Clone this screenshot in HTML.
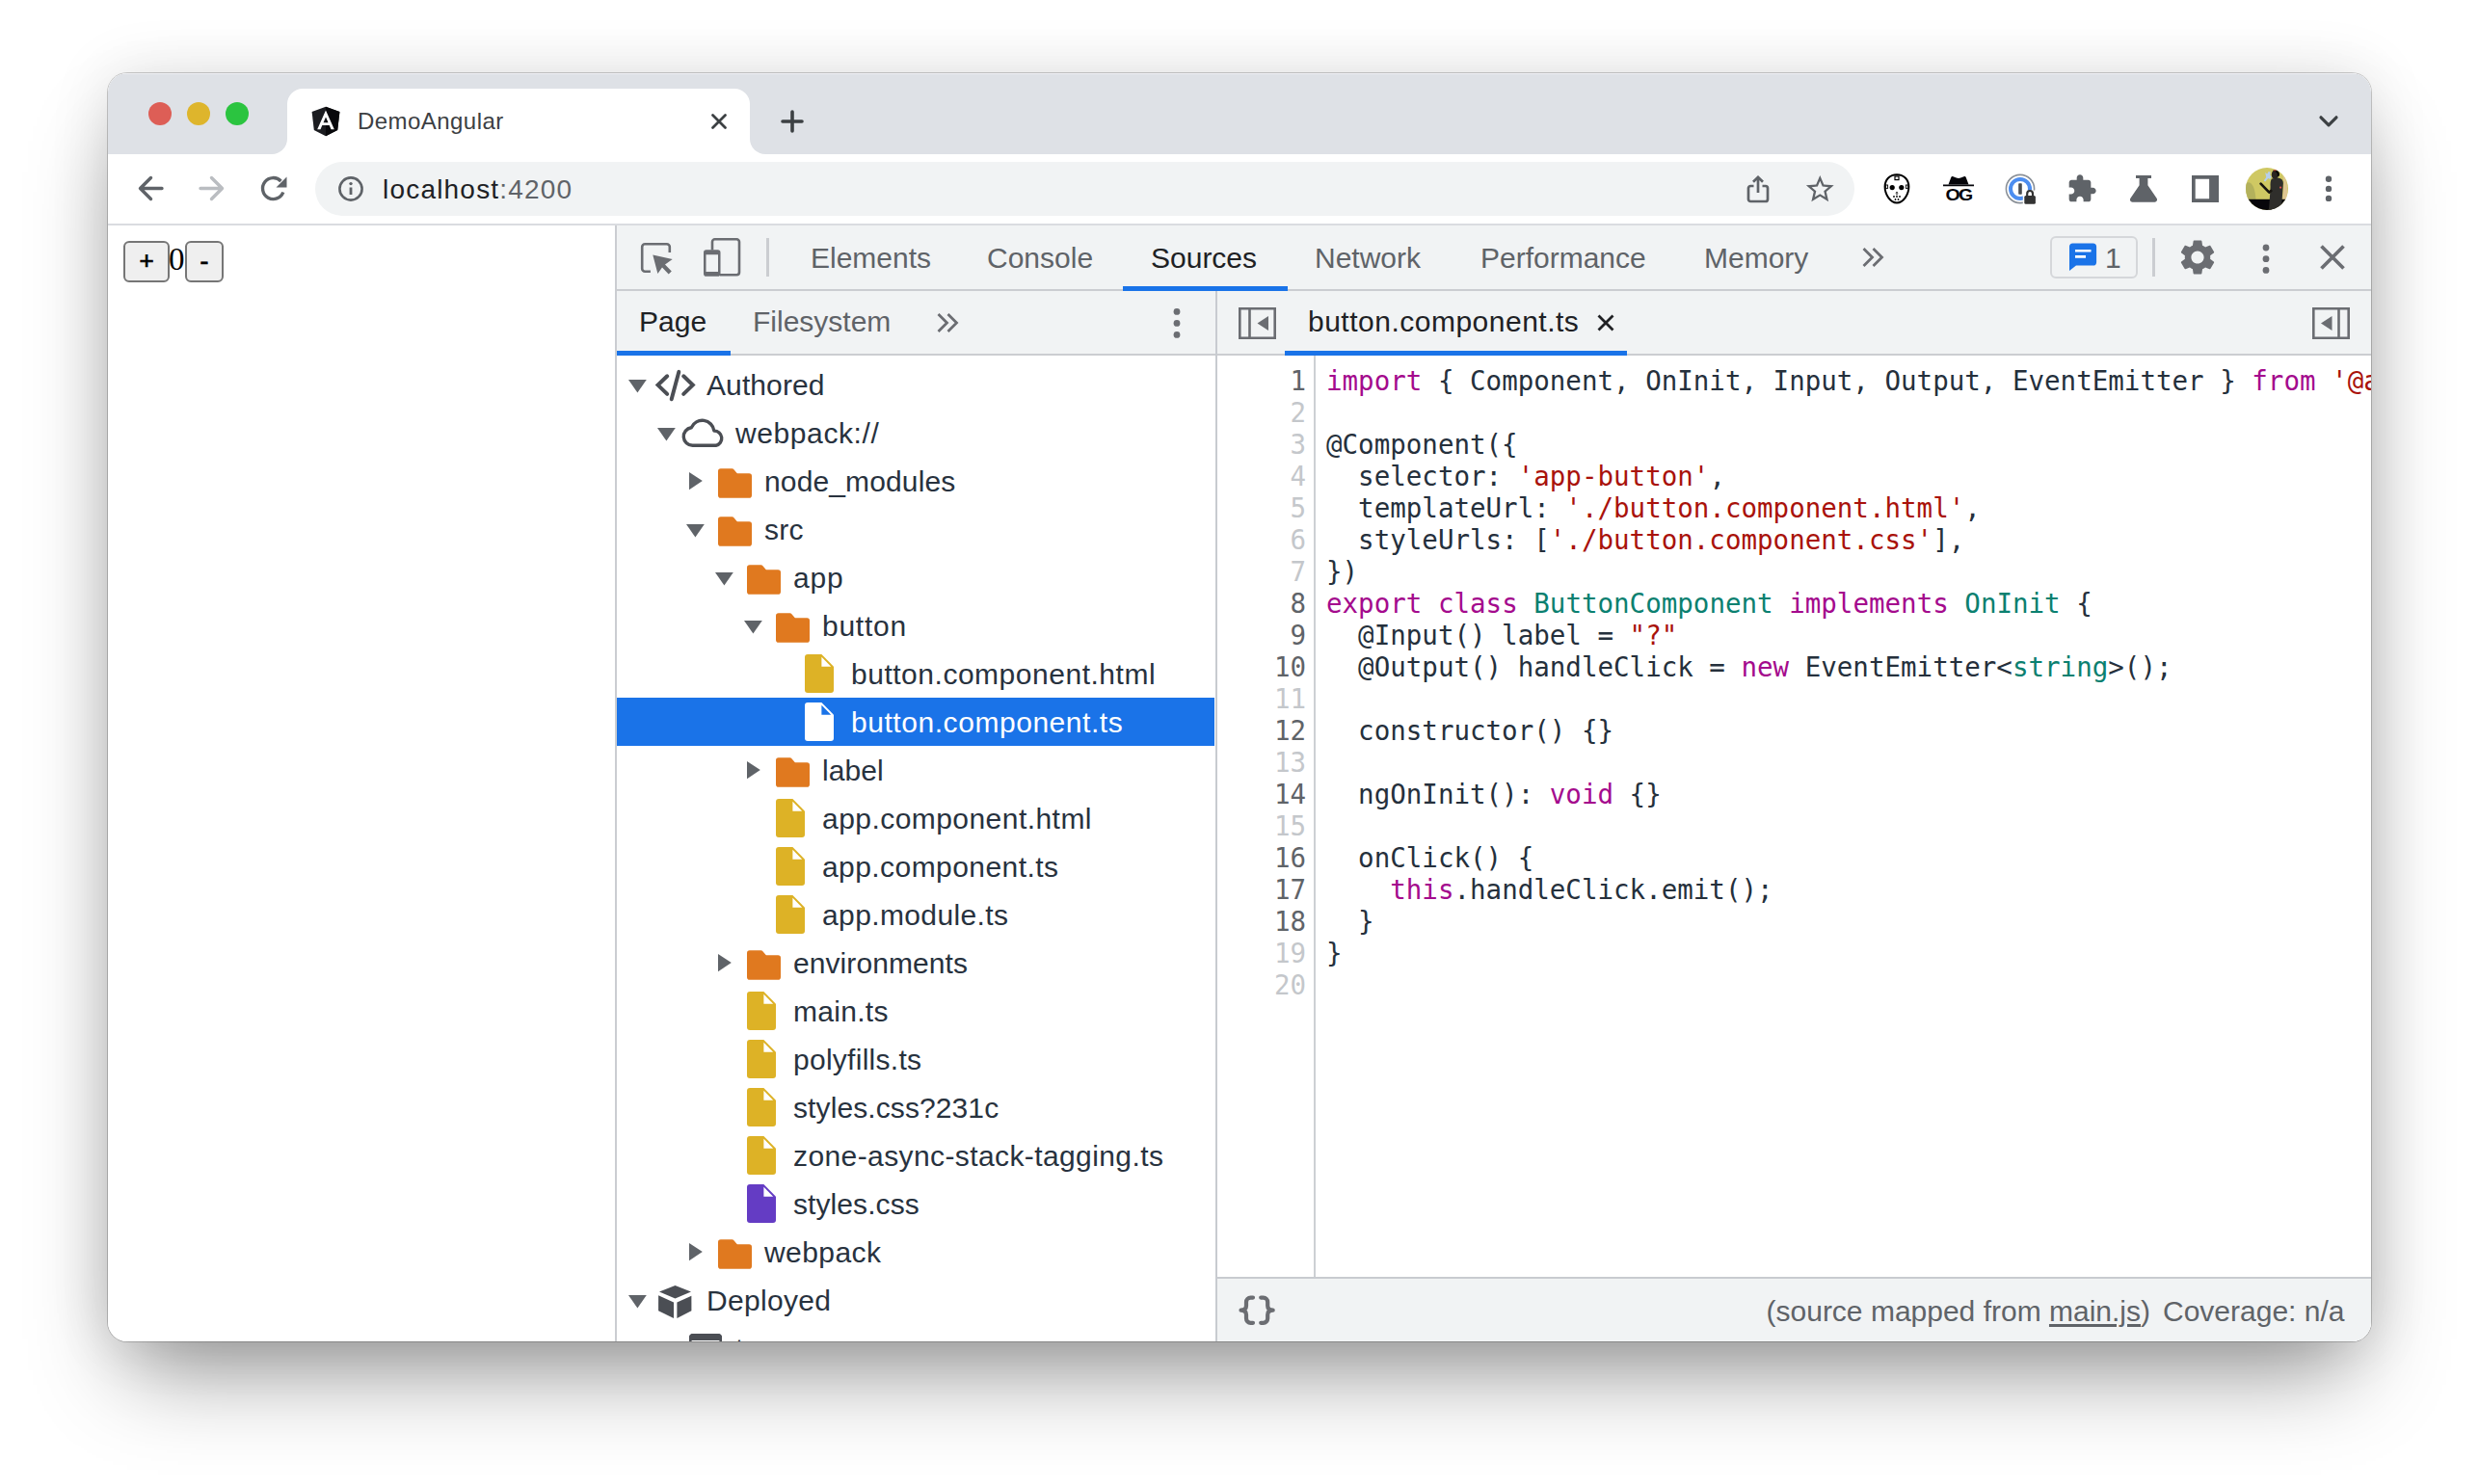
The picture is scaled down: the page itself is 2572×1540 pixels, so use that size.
<!DOCTYPE html>
<html lang="en">
<head>
<meta charset="utf-8">
<title>DemoAngular</title>
<style>
*{box-sizing:border-box;margin:0;padding:0}
html,body{width:2572px;height:1540px;background:#fff;overflow:hidden}
body{position:relative;font-family:"Liberation Sans",sans-serif;color:#202124}
.win{position:absolute;left:112px;top:76px;width:2348px;height:1316px;border-radius:20px;overflow:hidden;background:#fff}
.shadow{position:absolute;left:112px;top:76px;width:2348px;height:1316px;border-radius:20px;
  box-shadow:0 0 0 1px rgba(0,0,0,.20),0 50px 90px -20px rgba(0,0,0,.41),0 0 64px rgba(0,0,0,.11)}
.abs{position:absolute;left:-112px;top:-76px;width:2572px;height:1540px}
.abs *{position:absolute}
.t{white-space:pre;line-height:1}
/* chrome frame */
.tabstrip{left:112px;top:76px;width:2348px;height:84px;background:#dee1e6}
.tab{left:298px;top:92px;width:480px;height:68px;background:#fff;border-radius:16px 16px 0 0}
.tabcl{width:16px;height:16px;top:144px;background:#fff}
.tabcl i{left:0;top:0;width:32px;height:32px;border-radius:50%;background:#dee1e6}
.toolbar{left:112px;top:160px;width:2348px;height:72px;background:#fff}
.tbline{left:112px;top:232px;width:2348px;height:2px;background:#dadce0}
.omni{left:327px;top:168px;width:1597px;height:56px;border-radius:28px;background:#f1f3f4}
/* page */
.btn{top:250px;height:43px;border:2px solid #767676;border-radius:6px;background:#efefef}
/* devtools */
.dt{left:640px;top:234px;width:1820px;height:1158px;background:#fff}
.dtleft{left:638px;top:234px;width:2px;height:1158px;background:#cbcdd1}
.dtbar{left:640px;top:234px;width:1820px;height:68px;background:#f1f3f4;border-bottom:2px solid #cbcdd1}
.dtbar2{left:640px;top:302px;width:1820px;height:67px;background:#f1f3f4;border-bottom:2px solid #cbcdd1}
.ui{font-size:30px;letter-spacing:0}
.gray{color:#5f6368}
.blue{background:#1a73e8}
.vsplit{left:1261px;top:302px;width:2px;height:1090px;background:#c8cbd0}
.row{left:640px;width:620px;height:50px}
.row .t{top:9px;font-size:30px;letter-spacing:.38px;line-height:34px;color:#28323e}
.sel{background:#1a73e8}
.sel .t{color:#fff}
.gutline{left:1363px;top:369px;width:2px;height:957px;background:#cdd0d4}
.status{left:1263px;top:1325px;width:1197px;height:67px;background:#f1f3f4;border-top:2px solid #c8cbd0}
.code{font-family:"DejaVu Sans Mono","Liberation Mono",monospace;font-size:27.5px;line-height:33px;white-space:pre;color:#25303c}
.ln{left:1263px;width:92px;text-align:right}
.ln.d{color:#5f6368}
.ln.l{color:#c4c7cb}
.cl{left:1376px}
.k{color:#a40a8d;position:static!important}
.s{color:#a9120b;position:static!important}
.ty{color:#0b8070;position:static!important}
</style>
</head>
<body>
<div class="shadow"></div>
<div class="win"><div class="abs">

<!-- TAB STRIP -->
<div class="tabstrip"></div>
<div style="left:112px;top:76px;width:2348px;height:1px;background:#eff0f4"></div>
<div class="tab"></div>
<div class="tabcl" style="left:282px;overflow:hidden"><i style="left:-16px;top:-16px"></i></div>
<div class="tabcl" style="left:778px;overflow:hidden"><i style="left:0;top:-16px"></i></div>
<div class="toolbar"></div>
<div class="tbline"></div>
<div class="omni"></div>


<!-- traffic lights -->
<div style="left:154px;top:106px;width:24px;height:24px;border-radius:50%;background:#dd5e56"></div>
<div style="left:194px;top:106px;width:24px;height:24px;border-radius:50%;background:#deb52c"></div>
<div style="left:234px;top:106px;width:24px;height:24px;border-radius:50%;background:#2bc440"></div>
<!-- favicon -->
<svg style="left:322px;top:110px" width="32" height="32" viewBox="0 0 32 32"><path d="M16 .8 1.6 5.9l2.2 19L16 31.2l12.2-6.3 2.2-19z" fill="#1b1c20"/><path d="M16 .8v30.400l12.200-6.300 2.200-19z" fill="#08080b"/><path d="M16 4.600 7.200 24.300h3.300l1.800-4.400h7.400l1.800 4.400h3.300zm0 6.900 2.500 5.800h-5z" fill="#fff"/></svg>
<div class="t" style="left:371px;top:112px;font-size:24px;line-height:28px;color:#3c4043;letter-spacing:.45px">DemoAngular</div>
<svg style="left:736px;top:116px" width="20" height="20" viewBox="0 0 20 20"><path d="M3.500 3.500l13 13M16.500 3.500l-13 13" stroke="#3c4043" stroke-width="2.800" fill="none" stroke-linecap="round"/></svg>
<svg style="left:808px;top:112px" width="28" height="28" viewBox="0 0 28 28"><path d="M14 4v20M4 14h20" stroke="#3c4043" stroke-width="3.600" fill="none" stroke-linecap="round"/></svg>
<svg style="left:2402px;top:114px" width="28" height="24" viewBox="0 0 28 24"><path d="M6 7.800l8 8 8-8" stroke="#3c4043" stroke-width="3.200" fill="none" stroke-linecap="round" stroke-linejoin="round"/></svg>
<!-- nav -->
<svg style="left:140px;top:180px" width="32" height="32" viewBox="0 0 32 32"><path d="M28 15.500H6M16.500 4.500 5.500 15.500l11 11" stroke="#5f6368" stroke-width="3.400" fill="none" stroke-linecap="round" stroke-linejoin="round"/></svg>
<svg style="left:204px;top:180px" width="32" height="32" viewBox="0 0 32 32"><path d="M4 15.500h22M15.500 4.500l11 11-11 11" stroke="#babdc1" stroke-width="3.400" fill="none" stroke-linecap="round" stroke-linejoin="round"/></svg>
<svg style="left:268px;top:180px" width="32" height="32" viewBox="0 0 32 32"><path d="M25.800 19.500A11 11 0 1 1 23.500 8" stroke="#5f6368" stroke-width="3.400" fill="none"/><path d="M29.500 3.500v11h-11z" fill="#5f6368"/></svg>
<!-- omnibox -->
<svg style="left:350px;top:182px" width="28" height="28" viewBox="0 0 28 28"><circle cx="14" cy="14" r="11.600" stroke="#5f6368" stroke-width="2.600" fill="none"/><path d="M14 12.500v7.500" stroke="#5f6368" stroke-width="2.800"/><circle cx="14" cy="8.600" r="1.700" fill="#5f6368"/></svg>
<div class="t" style="left:397px;top:181px;font-size:28px;line-height:32px;color:#202124;letter-spacing:1.2px">localhost<span style="position:static;color:#5f6368">:4200</span></div>


<!-- share -->
<svg style="left:1808px;top:178px" width="32" height="36" viewBox="0 0 32 36"><path d="M11.500 15H8.300a2.300 2.300 0 0 0-2.300 2.300v11.400a2.300 2.300 0 0 0 2.300 2.300h15.400a2.300 2.300 0 0 0 2.300-2.300V17.300a2.300 2.300 0 0 0-2.300-2.300H20.500M16 22V6.500M11 10.800l5-5 5 5" stroke="#5f6368" stroke-width="2.700" fill="none"/></svg>
<!-- star -->
<svg style="left:1870.800px;top:179.100px" width="34.560" height="34.560" viewBox="0 0 24 24"><path d="M22 9.240l-7.190-.620L12 2 9.190 8.630 2 9.240l5.460 4.730L5.820 21 12 17.270 18.180 21l-1.630-7.030L22 9.240zM12 15.400l-3.760 2.270 1-4.280-3.320-2.880 4.380-.380L12 6.100l1.710 4.040 4.380.380-3.320 2.880 1 4.280L12 15.400z" fill="#5f6368"/></svg>
<!-- hockey mask -->
<svg style="left:1952px;top:178px" width="32" height="36" viewBox="0 0 32 36"><path d="M16 3.200c7.400 0 12.400 5.400 12.400 12.600 0 8-5.600 16.700-12.400 16.700S3.600 23.800 3.600 15.800C3.600 8.600 8.600 3.200 16 3.200z" fill="#fff" stroke="#000" stroke-width="2"/><circle cx="11.200" cy="16.600" r="2.600"/><circle cx="20.800" cy="16.600" r="2.600"/><path d="M14.400 22.500l1.600-1.700 1.600 1.700z"/><rect x="14" y="5" width="4" height="3.600" fill="none" stroke="#000" stroke-width="1.200"/><rect x="4.600" y="14" width="2" height="3.400" fill="none" stroke="#000" stroke-width=".9"/><rect x="25.400" y="14" width="2" height="3.400" fill="none" stroke="#000" stroke-width=".9"/><circle cx="13" cy="26" r=".9"/><circle cx="16" cy="26" r=".9"/><circle cx="19" cy="26" r=".9"/><circle cx="14.500" cy="29" r=".9"/><circle cx="17.500" cy="29" r=".9"/><circle cx="16" cy="23.800" r=".7"/></svg>
<!-- OG incognito -->
<svg style="left:2014px;top:180px" width="36" height="32" viewBox="0 0 36 32"><path d="M7.500 11.500 10.200 4.200c.4-1 1.200-1.400 2.200-1l3.300 1.400c1.500.6 3.100.6 4.600 0l3.300-1.400c1-.4 1.800 0 2.200 1l2.700 7.300z" fill="#05050a"/><path d="M2 12.400h32" stroke="#05050a" stroke-width="1.800"/><text transform="translate(18 28) scale(1.22 1)" x="0" y="0" text-anchor="middle" font-family="Liberation Sans,sans-serif" font-weight="700" font-size="16" letter-spacing="-1.400" fill="#05050a">OG</text></svg>
<!-- 1password -->
<svg style="left:2078px;top:178px" width="36" height="36" viewBox="0 0 36 36"><circle cx="18" cy="18" r="14.600" fill="#fff" stroke="#8a9097" stroke-width="1.600"/><circle cx="18" cy="18" r="10" fill="#fff" stroke="#4d8ef0" stroke-width="4"/><rect x="16.200" y="12.200" width="3.600" height="11.600" rx=".8" fill="#4a4d52"/><rect x="20.800" y="19.600" width="14" height="15.400" fill="#fff"/><path d="M25.200 25.500v-2.600a2.900 2.900 0 0 1 5.800 0v2.600" stroke="#333" stroke-width="2.200" fill="none"/><rect x="22.300" y="25" width="11.600" height="8.800" rx="1.600" fill="#333"/></svg>
<!-- puzzle -->
<svg style="left:2143.600px;top:180px" width="32" height="32" viewBox="0 0 24 24"><path d="M20.500 11H19V7c0-1.100-.9-2-2-2h-4V3.500C13 2.120 11.880 1 10.500 1S8 2.120 8 3.500V5H4c-1.100 0-1.990.9-1.990 2v3.800H3.500c1.490 0 2.700 1.210 2.700 2.700s-1.210 2.700-2.700 2.700H2V20c0 1.100.9 2 2 2h3.800v-1.500c0-1.490 1.210-2.700 2.700-2.700 1.490 0 2.700 1.210 2.700 2.700V22H17c1.100 0 2-.9 2-2v-4h1.500c1.380 0 2.500-1.120 2.500-2.500S21.880 11 20.500 11z" fill="#5f6368"/></svg>
<!-- flask -->
<svg style="left:2208px;top:180px" width="32" height="32" viewBox="0 0 32 32"><path d="M8 1.900h16v3.200h-3.600v7.200l9.200 13.500c1.100 1.700.1 3.900-2 3.900H4.400c-2.100 0-3.100-2.200-2-3.900l9.200-13.500V5.100H8z" fill="#5f6368"/></svg>
<!-- side panel -->
<svg style="left:2274px;top:182px" width="28" height="28" viewBox="0 0 28 28"><path d="M0 0h28v28H0zM3.700 3.700v20.600h14.400V3.700z" fill="#5f6368" fill-rule="evenodd"/></svg>
<!-- avatar -->
<svg style="left:2330px;top:174px" width="44" height="44" viewBox="0 0 44 44"><defs><clipPath id="av"><circle cx="22" cy="22" r="22"/></clipPath></defs><g clip-path="url(#av)"><rect width="44" height="44" fill="#cfc863"/><path d="M0 16C5 13 9.500 18 10.500 33H0z" fill="#b3b15c"/><path d="M38.500 7C43 13 45 24 41.500 33h-3.300l1.300-18z" fill="#e4c6a2" opacity=".75"/><rect y="32.800" width="44" height="12" fill="#07060a"/><path d="M27 11.500l6.500-1c3.500.5 5.500 2.500 5.400 5.500l-1.200 17-1.200 11H24l.8-11 .8-13c-.2-4 0-6.500 1.400-8.500z" fill="#2f2e2b"/><ellipse cx="30.300" cy="7.300" rx="3.500" ry="4.400" fill="#2b2621"/><path d="M28.500 2.800c4-1.400 7.300 1 6.300 5.800l-2 1c.5-3.400-.5-5.400-4.300-5.800z" fill="#050505"/><path d="M15.600 16.600l8.700 9 2-1.600" stroke="#17140f" stroke-width="2.700" fill="none" stroke-linecap="round" stroke-linejoin="round"/><path d="M20.200 5l2 1.500 1.500-2.500 2 .5-.5 3 1.500 2-1.500 2.500-2-1-3 3.500-1.500-1 2.500-3.500z" fill="#b6cfec"/><circle cx="36.100" cy="20.600" r="1.100" fill="#e25050"/><rect x="29" y="2.300" width="2.600" height="1" fill="#e25050"/></g></svg>
<!-- menu -->
<svg style="left:2410px;top:180px" width="12" height="32" viewBox="0 0 12 32"><circle cx="6" cy="5.800" r="3.200" fill="#5f6368"/><circle cx="6" cy="15.900" r="3.200" fill="#5f6368"/><circle cx="6" cy="25.900" r="3.200" fill="#5f6368"/></svg>

<!-- PAGE -->
<div class="btn" style="left:128px;width:48px"></div>
<div class="t" style="left:128px;width:48px;top:255px;text-align:center;font-size:26px;line-height:30px;color:#000;-webkit-text-stroke:.7px #000">+</div>
<div class="t" style="left:175px;top:251px;font-family:'Liberation Serif',serif;font-size:33px;line-height:36px;color:#000">0</div>
<div class="btn" style="left:192px;width:40px"></div>
<div class="t" style="left:192px;width:40px;top:256px;text-align:center;font-size:28px;line-height:30px;color:#000;-webkit-text-stroke:.5px #000">-</div>


<!-- DEVTOOLS -->
<div class="dt"></div>
<div class="dtbar"></div>
<div class="dtbar2"></div>
<div class="dtleft"></div>
<div class="vsplit"></div>


<!-- devtools main toolbar -->
<svg style="left:660px;top:246px" width="44" height="44" viewBox="0 0 44 44"><path d="M14.900 35.700H9.200a3 3 0 0 1-3-3V10.300a3 3 0 0 1 3-3h22.600a3 3 0 0 1 3 3v5.600" stroke="#6b6d72" stroke-width="2.600" fill="none"/><path d="M17.300 18.400 37.700 23.100 30 28.600 36.800 35.400 33.700 38.400 27 31.600 22.400 38z" fill="#6b6d72"/></svg>
<svg style="left:726px;top:244px" width="46" height="46" viewBox="0 0 46 46"><path d="M13 15.500V7a2.700 2.700 0 0 1 2.700-2.700h22.600a2.700 2.700 0 0 1 2.700 2.700v31.500a2.700 2.700 0 0 1-2.700 2.700H21" stroke="#6b6d72" stroke-width="2.600" fill="none"/><path d="M6.800 15.300h11.900a2.800 2.800 0 0 1 2.800 2.800v21.800a2.800 2.800 0 0 1-2.800 2.800H6.800a2.800 2.800 0 0 1-2.800-2.800V18.100a2.800 2.800 0 0 1 2.800-2.800zM6.500 20.300v17.800h12.500V20.300z" fill="#6b6d72" fill-rule="evenodd"/></svg>
<div style="left:795px;top:247px;width:3px;height:40px;background:#cbcdd1"></div>
<div class="t ui gray" style="left:841px;top:251px;line-height:34px">Elements</div>
<div class="t ui gray" style="left:1024px;top:251px;line-height:34px">Console</div>
<div class="t ui" style="left:1194px;top:251px;line-height:34px;color:#202124">Sources</div>
<div class="t ui gray" style="left:1364px;top:251px;line-height:34px">Network</div>
<div class="t ui gray" style="left:1536px;top:251px;line-height:34px">Performance</div>
<div class="t ui gray" style="left:1768px;top:251px;line-height:34px">Memory</div>
<div class="blue" style="left:1165px;top:297px;width:171px;height:5px"></div>
<svg style="left:1930px;top:254px" width="28" height="26" viewBox="0 0 28 26"><path d="M3.500 4l9 9-9 9M13.500 4l9 9-9 9" stroke="#6b6d72" stroke-width="2.800" fill="none"/></svg>
<!-- issues -->
<div style="left:2127px;top:245px;width:91px;height:44px;border:2px solid #d5d7da;border-radius:6px;background:#f1f3f4"></div>
<svg style="left:2146px;top:251px" width="30" height="32" viewBox="0 0 30 32"><path d="M4.500 1.500h21a3.600 3.600 0 0 1 3.600 3.600v15.800a3.600 3.600 0 0 1-3.600 3.600H8l-7 5.500V5.100a3.600 3.600 0 0 1 3.500-3.600z" fill="#1a73e8"/><path d="M7 9.200h16.500M7 15.400h11" stroke="#fff" stroke-width="2.600"/></svg>
<div class="t ui gray" style="left:2184px;top:251px;line-height:34px">1</div>
<div style="left:2233px;top:247px;width:3px;height:40px;background:#cbcdd1"></div>
<svg style="left:2257.700px;top:245.100px" width="44" height="44" viewBox="0 0 24 24"><path d="M19.140 12.940c.04-.3.060-.610.060-.940 0-.320-.020-.640-.070-.940l2.030-1.580c.18-.14.230-.41.120-.61l-1.920-3.320c-.12-.22-.37-.29-.59-.22l-2.390.96c-.5-.38-1.030-.7-1.620-.94l-.36-2.540c-.04-.24-.24-.41-.48-.41h-3.840c-.24 0-.43.170-.47.410l-.36 2.540c-.59.240-1.130.57-1.620.94l-2.390-.96c-.22-.08-.47 0-.59.220L2.740 8.870c-.12.210-.08.470.12.610l2.030 1.580c-.05.300-.09.630-.09.940s.02.640.07.940l-2.030 1.580c-.18.140-.23.410-.12.610l1.920 3.320c.12.220.37.290.59.220l2.390-.96c.5.380 1.030.7 1.620.94l.36 2.540c.05.240.24.410.48.410h3.840c.24 0 .44-.17.470-.41l.36-2.540c.59-.24 1.130-.56 1.620-.94l2.390.96c.22.080.47 0 .59-.22l1.920-3.320c.12-.22.070-.47-.12-.61l-2.010-1.580zM12 15.600c-1.980 0-3.600-1.620-3.600-3.600s1.620-3.600 3.600-3.600 3.600 1.620 3.600 3.600-1.620 3.600-3.600 3.600z" fill="#6b6d72"/></svg>
<svg style="left:2345px;top:252px" width="12" height="34" viewBox="0 0 12 34"><circle cx="6" cy="5" r="3.400" fill="#6b6d72"/><circle cx="6" cy="16.700" r="3.400" fill="#6b6d72"/><circle cx="6" cy="28.400" r="3.400" fill="#6b6d72"/></svg>
<svg style="left:2404px;top:251px" width="32" height="32" viewBox="0 0 32 32"><path d="M4.500 4.500l23 23M27.500 4.500l-23 23" stroke="#6b6d72" stroke-width="3.700" fill="none"/></svg>

<!-- second row: navigator tabs -->
<div class="t ui" style="left:663px;top:317px;line-height:34px;color:#202124">Page</div>
<div class="t ui gray" style="left:781px;top:317px;line-height:34px">Filesystem</div>
<div class="blue" style="left:640px;top:364px;width:118px;height:5px"></div>
<svg style="left:970px;top:322px" width="28" height="26" viewBox="0 0 28 26"><path d="M3.500 4l9 9-9 9M13.500 4l9 9-9 9" stroke="#6b6d72" stroke-width="2.800" fill="none"/></svg>
<svg style="left:1215px;top:318px" width="12" height="36" viewBox="0 0 12 36"><circle cx="6" cy="5.400" r="3.400" fill="#6b6d72"/><circle cx="6" cy="17.400" r="3.400" fill="#6b6d72"/><circle cx="6" cy="29.400" r="3.400" fill="#6b6d72"/></svg>
<!-- editor tab row -->
<svg style="left:1285px;top:319px" width="39" height="33" viewBox="0 0 39 33"><path d="M1.300 1.300h36.400v30.400H1.300zM11.500 1.300v30.400" stroke="#6b6d72" stroke-width="2.600" fill="none"/><path d="M31 9v15l-11.500-7.500z" fill="#6b6d72"/></svg>
<div class="t ui" style="left:1357px;top:317px;line-height:34px;color:#202124;letter-spacing:.5px">button.component.ts</div>
<svg style="left:1655px;top:324px" width="22" height="22" viewBox="0 0 22 22"><path d="M3.500 3.500l15 15M18.500 3.500l-15 15" stroke="#202124" stroke-width="2.800" fill="none"/></svg>
<div class="blue" style="left:1333px;top:364px;width:355px;height:5px"></div>
<svg style="left:2399px;top:319px" width="39" height="33" viewBox="0 0 39 33"><path d="M1.300 1.300h36.400v30.400H1.300zM27.500 1.300v30.400" stroke="#6b6d72" stroke-width="2.600" fill="none"/><path d="M20.500 9v15L9 16.500z" fill="#6b6d72"/></svg>

<!--TREE-->
<div class="row" style="top:374px">
<svg style="left:12px;top:20px" width="19" height="14" viewBox="0 0 19 14"><path d="M0 0h18.800L9.400 13.500z" fill="#5f6368"/></svg>
<svg style="left:38px;top:8px" width="46" height="36" viewBox="0 0 46 36"><path d="M14.200 8.300 4.600 17.600l9.600 9.300M31.200 8.300l9.600 9.300-9.600 9.300M26.300 3.900 18.700 32.300" stroke="#4b4e54" stroke-width="4" fill="none" stroke-linecap="round" stroke-linejoin="miter"/></svg>
<div class="t" style="left:93px;letter-spacing:0.1px">Authored</div>
</div>
<div class="row" style="top:424px">
<svg style="left:42px;top:20px" width="19" height="14" viewBox="0 0 19 14"><path d="M0 0h18.800L9.400 13.500z" fill="#5f6368"/></svg>
<svg style="left:66px;top:8px" width="48" height="34" viewBox="0 0 48 34"><path d="M12.500 30.300a9.300 9.300 0 0 1-1.300-18.500 12.400 12.400 0 0 1 23.700 3.300 7.700 7.700 0 0 1 1.900 15.200z" stroke="#4b4e54" stroke-width="3.400" fill="none" stroke-linejoin="round"/></svg>
<div class="t" style="left:123px;letter-spacing:0.6px">webpack://</div>
</div>
<div class="row" style="top:474px">
<svg style="left:75px;top:16px" width="14" height="19" viewBox="0 0 14 19"><path d="M0 0l13.800 9.100L0 18.200z" fill="#5f6368"/></svg>
<svg style="left:105px;top:12px" width="36" height="31" viewBox="0 0 36 31"><path d="M3 .3h11.400c.8 0 1.500.3 2 .9l3 3.500c.3.400.8.600 1.300.600H32.200A2.800 2.800 0 0 1 35 8.100v19.800a2.800 2.800 0 0 1-2.800 2.800H2.800A2.800 2.800 0 0 1 0 27.900V3.100A2.800 2.800 0 0 1 2.800.3z" fill="#e0791f"/></svg>
<div class="t" style="left:153px;letter-spacing:0.13px">node_modules</div>
</div>
<div class="row" style="top:524px">
<svg style="left:72px;top:20px" width="19" height="14" viewBox="0 0 19 14"><path d="M0 0h18.800L9.400 13.500z" fill="#5f6368"/></svg>
<svg style="left:105px;top:12px" width="36" height="31" viewBox="0 0 36 31"><path d="M3 .3h11.400c.8 0 1.500.3 2 .9l3 3.500c.3.400.8.600 1.300.600H32.200A2.800 2.800 0 0 1 35 8.100v19.800a2.800 2.800 0 0 1-2.800 2.800H2.800A2.800 2.800 0 0 1 0 27.900V3.100A2.800 2.800 0 0 1 2.800.3z" fill="#e0791f"/></svg>
<div class="t" style="left:153px;letter-spacing:0.2px">src</div>
</div>
<div class="row" style="top:574px">
<svg style="left:102px;top:20px" width="19" height="14" viewBox="0 0 19 14"><path d="M0 0h18.800L9.400 13.500z" fill="#5f6368"/></svg>
<svg style="left:135px;top:12px" width="36" height="31" viewBox="0 0 36 31"><path d="M3 .3h11.400c.8 0 1.500.3 2 .9l3 3.500c.3.400.8.600 1.300.600H32.200A2.800 2.800 0 0 1 35 8.100v19.800a2.800 2.800 0 0 1-2.800 2.800H2.800A2.800 2.800 0 0 1 0 27.900V3.100A2.800 2.800 0 0 1 2.800.3z" fill="#e0791f"/></svg>
<div class="t" style="left:183px;letter-spacing:0.8px">app</div>
</div>
<div class="row" style="top:624px">
<svg style="left:132px;top:20px" width="19" height="14" viewBox="0 0 19 14"><path d="M0 0h18.800L9.400 13.500z" fill="#5f6368"/></svg>
<svg style="left:165px;top:12px" width="36" height="31" viewBox="0 0 36 31"><path d="M3 .3h11.400c.8 0 1.500.3 2 .9l3 3.500c.3.400.8.600 1.300.600H32.200A2.800 2.800 0 0 1 35 8.100v19.800a2.800 2.800 0 0 1-2.800 2.800H2.800A2.800 2.800 0 0 1 0 27.900V3.100A2.800 2.800 0 0 1 2.800.3z" fill="#e0791f"/></svg>
<div class="t" style="left:213px;letter-spacing:0.75px">button</div>
</div>
<div class="row" style="top:674px">
<svg style="left:195px;top:5px" width="30" height="40" viewBox="0 0 30 40"><path d="M3 0h14.400L30 12.700V37a3 3 0 0 1-3 3H3a3 3 0 0 1-3-3V3a3 3 0 0 1 3-3z" fill="#ddb226"/><path d="M17.400 2.800v9.900h9.800z" fill="#fff"/></svg>
<div class="t" style="left:243px;letter-spacing:0.52px">button.component.html</div>
</div>
<div class="row sel" style="top:724px">
<svg style="left:195px;top:5px" width="30" height="40" viewBox="0 0 30 40"><path d="M3 0h14.400L30 12.700V37a3 3 0 0 1-3 3H3a3 3 0 0 1-3-3V3a3 3 0 0 1 3-3z" fill="#fff"/><path d="M17.400 2.800v9.900h9.800z" fill="#1a73e8"/></svg>
<div class="t" style="left:243px;letter-spacing:0.55px">button.component.ts</div>
</div>
<div class="row" style="top:774px">
<svg style="left:135px;top:16px" width="14" height="19" viewBox="0 0 14 19"><path d="M0 0l13.800 9.100L0 18.200z" fill="#5f6368"/></svg>
<svg style="left:165px;top:12px" width="36" height="31" viewBox="0 0 36 31"><path d="M3 .3h11.400c.8 0 1.500.3 2 .9l3 3.500c.3.400.8.600 1.300.600H32.200A2.800 2.800 0 0 1 35 8.100v19.800a2.800 2.800 0 0 1-2.800 2.800H2.800A2.800 2.800 0 0 1 0 27.900V3.100A2.800 2.800 0 0 1 2.800.3z" fill="#e0791f"/></svg>
<div class="t" style="left:213px;letter-spacing:0.05px">label</div>
</div>
<div class="row" style="top:824px">
<svg style="left:165px;top:5px" width="30" height="40" viewBox="0 0 30 40"><path d="M3 0h14.400L30 12.700V37a3 3 0 0 1-3 3H3a3 3 0 0 1-3-3V3a3 3 0 0 1 3-3z" fill="#ddb226"/><path d="M17.400 2.800v9.900h9.800z" fill="#fff"/></svg>
<div class="t" style="left:213px;letter-spacing:0.45px">app.component.html</div>
</div>
<div class="row" style="top:874px">
<svg style="left:165px;top:5px" width="30" height="40" viewBox="0 0 30 40"><path d="M3 0h14.400L30 12.700V37a3 3 0 0 1-3 3H3a3 3 0 0 1-3-3V3a3 3 0 0 1 3-3z" fill="#ddb226"/><path d="M17.400 2.800v9.900h9.800z" fill="#fff"/></svg>
<div class="t" style="left:213px;letter-spacing:0.43px">app.component.ts</div>
</div>
<div class="row" style="top:924px">
<svg style="left:165px;top:5px" width="30" height="40" viewBox="0 0 30 40"><path d="M3 0h14.400L30 12.700V37a3 3 0 0 1-3 3H3a3 3 0 0 1-3-3V3a3 3 0 0 1 3-3z" fill="#ddb226"/><path d="M17.400 2.800v9.900h9.800z" fill="#fff"/></svg>
<div class="t" style="left:213px;letter-spacing:0.38px">app.module.ts</div>
</div>
<div class="row" style="top:974px">
<svg style="left:105px;top:16px" width="14" height="19" viewBox="0 0 14 19"><path d="M0 0l13.800 9.100L0 18.200z" fill="#5f6368"/></svg>
<svg style="left:135px;top:12px" width="36" height="31" viewBox="0 0 36 31"><path d="M3 .3h11.400c.8 0 1.500.3 2 .9l3 3.500c.3.400.8.600 1.300.600H32.200A2.800 2.800 0 0 1 35 8.100v19.800a2.800 2.800 0 0 1-2.800 2.800H2.800A2.800 2.800 0 0 1 0 27.900V3.100A2.800 2.800 0 0 1 2.800.3z" fill="#e0791f"/></svg>
<div class="t" style="left:183px;letter-spacing:0.08px">environments</div>
</div>
<div class="row" style="top:1024px">
<svg style="left:135px;top:5px" width="30" height="40" viewBox="0 0 30 40"><path d="M3 0h14.400L30 12.700V37a3 3 0 0 1-3 3H3a3 3 0 0 1-3-3V3a3 3 0 0 1 3-3z" fill="#ddb226"/><path d="M17.400 2.800v9.900h9.800z" fill="#fff"/></svg>
<div class="t" style="left:183px;letter-spacing:0.3px">main.ts</div>
</div>
<div class="row" style="top:1074px">
<svg style="left:135px;top:5px" width="30" height="40" viewBox="0 0 30 40"><path d="M3 0h14.400L30 12.700V37a3 3 0 0 1-3 3H3a3 3 0 0 1-3-3V3a3 3 0 0 1 3-3z" fill="#ddb226"/><path d="M17.400 2.800v9.900h9.800z" fill="#fff"/></svg>
<div class="t" style="left:183px;letter-spacing:0.27px">polyfills.ts</div>
</div>
<div class="row" style="top:1124px">
<svg style="left:135px;top:5px" width="30" height="40" viewBox="0 0 30 40"><path d="M3 0h14.400L30 12.700V37a3 3 0 0 1-3 3H3a3 3 0 0 1-3-3V3a3 3 0 0 1 3-3z" fill="#ddb226"/><path d="M17.400 2.800v9.900h9.800z" fill="#fff"/></svg>
<div class="t" style="left:183px;letter-spacing:0.1px">styles.css?231c</div>
</div>
<div class="row" style="top:1174px">
<svg style="left:135px;top:5px" width="30" height="40" viewBox="0 0 30 40"><path d="M3 0h14.400L30 12.700V37a3 3 0 0 1-3 3H3a3 3 0 0 1-3-3V3a3 3 0 0 1 3-3z" fill="#ddb226"/><path d="M17.400 2.800v9.900h9.800z" fill="#fff"/></svg>
<div class="t" style="left:183px;letter-spacing:0.4px">zone-async-stack-tagging.ts</div>
</div>
<div class="row" style="top:1224px">
<svg style="left:135px;top:5px" width="30" height="40" viewBox="0 0 30 40"><path d="M3 0h14.400L30 12.700V37a3 3 0 0 1-3 3H3a3 3 0 0 1-3-3V3a3 3 0 0 1 3-3z" fill="#643cc4"/><path d="M17.400 2.800v9.900h9.800z" fill="#fff"/></svg>
<div class="t" style="left:183px;letter-spacing:0.08px">styles.css</div>
</div>
<div class="row" style="top:1274px">
<svg style="left:75px;top:16px" width="14" height="19" viewBox="0 0 14 19"><path d="M0 0l13.800 9.100L0 18.200z" fill="#5f6368"/></svg>
<svg style="left:105px;top:12px" width="36" height="31" viewBox="0 0 36 31"><path d="M3 .3h11.400c.8 0 1.500.3 2 .9l3 3.500c.3.400.8.600 1.300.600H32.200A2.800 2.800 0 0 1 35 8.100v19.800a2.800 2.800 0 0 1-2.800 2.800H2.800A2.800 2.800 0 0 1 0 27.900V3.100A2.800 2.800 0 0 1 2.800.3z" fill="#e0791f"/></svg>
<div class="t" style="left:153px;letter-spacing:0.42px">webpack</div>
</div>
<div class="row" style="top:1324px">
<svg style="left:12px;top:20px" width="19" height="14" viewBox="0 0 19 14"><path d="M0 0h18.800L9.400 13.500z" fill="#5f6368"/></svg>
<svg style="left:41px;top:8px" width="40" height="38" viewBox="0 0 40 38"><path d="M19.500 2 36 8.600 19.500 15.600 3 8.600z" fill="#4b4e54"/><path d="M2.100 12.200 18 19.500V35.900L2.100 28.200z" fill="#4b4e54"/><path d="M36.400 12.700 21.400 19.500V35.900L36.400 28.200z" fill="#4b4e54"/></svg>
<div class="t" style="left:93px;letter-spacing:0.3px">Deployed</div>
</div>
<div class="row" style="top:1374px">
<svg style="left:42px;top:20px" width="19" height="14" viewBox="0 0 19 14"><path d="M0 0h18.800L9.400 13.500z" fill="#5f6368"/></svg>
<svg style="left:75px;top:10px" width="34" height="30" viewBox="0 0 34 30"><path d="M4 1.300h26a2.700 2.700 0 0 1 2.700 2.700v22a2.700 2.700 0 0 1-2.700 2.700H4a2.700 2.700 0 0 1-2.700-2.700V4a2.700 2.700 0 0 1 2.700-2.700z" fill="#fff" stroke="#4b4e54" stroke-width="2.600"/><path d="M4 0h26a4 4 0 0 1 4 4v3H0V4a4 4 0 0 1 4-4z" fill="#4b4e54"/></svg>
<div class="t" style="left:123px;letter-spacing:0.3px">top</div>
</div>
<!--TREE-END-->
<!--CODE-->
<div class="clip" style="left:1263px;top:369px;width:1197px;height:957px;overflow:hidden"></div>
<div class="code ln d" style="top:379px">1</div>
<div class="code cl" style="top:379px"><span class="k">import</span> { Component, OnInit, Input, Output, EventEmitter } <span class="k">from</span> <span class="s">'@angular/core'</span>;</div>
<div class="code ln l" style="top:412px">2</div>
<div class="code ln l" style="top:445px">3</div>
<div class="code cl" style="top:445px">@Component({</div>
<div class="code ln l" style="top:478px">4</div>
<div class="code cl" style="top:478px">  selector: <span class="s">'app-button'</span>,</div>
<div class="code ln l" style="top:511px">5</div>
<div class="code cl" style="top:511px">  templateUrl: <span class="s">'./button.component.html'</span>,</div>
<div class="code ln l" style="top:544px">6</div>
<div class="code cl" style="top:544px">  styleUrls: [<span class="s">'./button.component.css'</span>],</div>
<div class="code ln l" style="top:577px">7</div>
<div class="code cl" style="top:577px">})</div>
<div class="code ln d" style="top:610px">8</div>
<div class="code cl" style="top:610px"><span class="k">export</span> <span class="k">class</span> <span class="ty">ButtonComponent</span> <span class="k">implements</span> <span class="ty">OnInit</span> {</div>
<div class="code ln d" style="top:643px">9</div>
<div class="code cl" style="top:643px">  @Input() label = <span class="s">"?"</span></div>
<div class="code ln d" style="top:676px">10</div>
<div class="code cl" style="top:676px">  @Output() handleClick = <span class="k">new</span> EventEmitter&lt;<span class="ty">string</span>&gt;();</div>
<div class="code ln l" style="top:709px">11</div>
<div class="code ln d" style="top:742px">12</div>
<div class="code cl" style="top:742px">  constructor() {}</div>
<div class="code ln l" style="top:775px">13</div>
<div class="code ln d" style="top:808px">14</div>
<div class="code cl" style="top:808px">  ngOnInit(): <span class="k">void</span> {}</div>
<div class="code ln l" style="top:841px">15</div>
<div class="code ln d" style="top:874px">16</div>
<div class="code cl" style="top:874px">  onClick() {</div>
<div class="code ln d" style="top:907px">17</div>
<div class="code cl" style="top:907px">    <span class="k">this</span>.handleClick.emit();</div>
<div class="code ln d" style="top:940px">18</div>
<div class="code cl" style="top:940px">  }</div>
<div class="code ln l" style="top:973px">19</div>
<div class="code cl" style="top:973px">}</div>
<div class="code ln l" style="top:1006px">20</div>
<!--CODE-END-->
<div class="gutline"></div>
<div class="status"></div>
<svg style="left:1283px;top:1342px" width="44" height="36" viewBox="0 0 44 36"><path d="M17 4.600h-2.500a4.500 4.500 0 0 0-4.500 4.500v4c0 2.500-1.500 4.600-5.500 4.600 4 0 5.500 2.100 5.500 4.600v4a4.500 4.500 0 0 0 4.500 4.500H17M25.200 4.600h2.500a4.500 4.500 0 0 1 4.500 4.500v4c0 2.500 1.500 4.600 5.500 4.600-4 0-5.500 2.100-5.500 4.600v4a4.500 4.500 0 0 1-4.500 4.500h-2.500" stroke="#6b6d72" stroke-width="4.200" fill="none" stroke-linecap="round" stroke-linejoin="round"/></svg>
<div class="t ui gray" style="left:1731px;width:500px;text-align:right;top:1344px;line-height:34px">(source mapped from <span style="position:static;text-decoration:underline;text-decoration-thickness:2.500px;text-underline-offset:3px">main.js</span>)</div>
<div class="t ui gray" style="left:2244px;top:1344px;line-height:34px;letter-spacing:0">Coverage: n/a</div>


</div></div>
</body>
</html>
